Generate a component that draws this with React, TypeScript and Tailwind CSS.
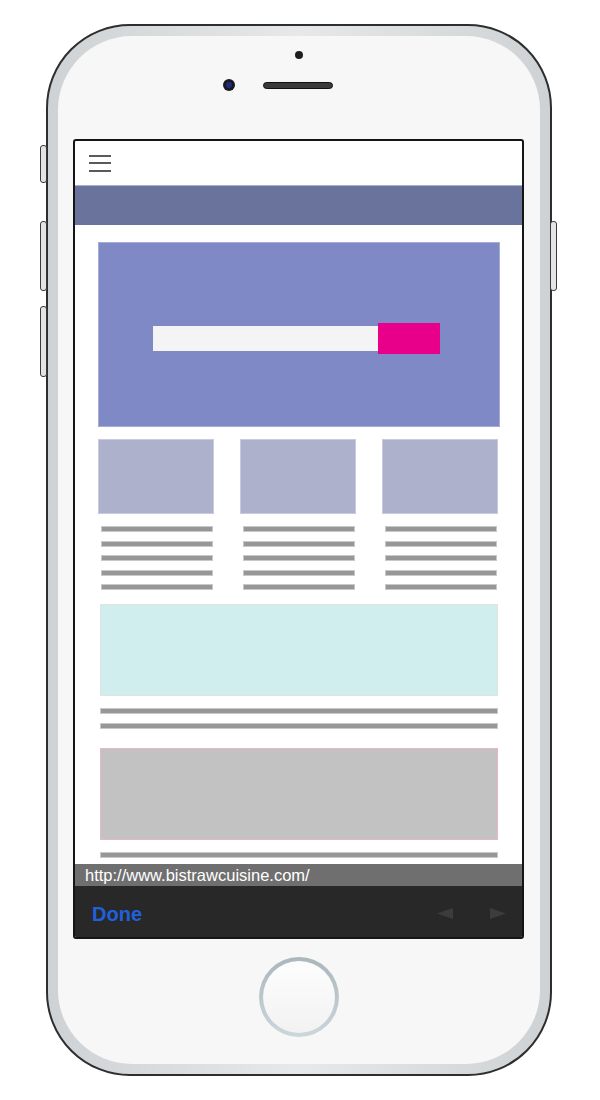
import React from "react";

const SideButton = ({ className }: { className: string }) => (
  <div
    className={`absolute w-[7px] rounded-[3px] border-[1.5px] border-[#3a3a3a] bg-[#e4e4e4] ${className}`}
  />
);

const Line = ({ className = "" }: { className?: string }) => (
  <div className={`h-[6px] bg-[#979797] border border-[#c9c9c9] ${className}`} />
);

const Column = () => (
  <div className="flex w-[116px] flex-col">
    <div className="h-[75px] border border-[#c8cbe0] bg-[#adb1cb]" />
    <div className="mt-[12px] flex flex-col gap-[8.5px] pl-[3px] pr-[1px]">
      <Line />
      <Line />
      <Line />
      <Line />
      <Line />
    </div>
  </div>
);

const Screen = () => (
  <div className="ml-[15px] mt-[48px] flex h-[800px] w-[451px] flex-col self-start overflow-hidden rounded-[3px] border-2 border-[#151515] bg-white">
    {/* header */}
    <div className="flex h-[44px] shrink-0 items-center pl-[14px]">
      <div className="flex w-[22px] flex-col gap-[5.5px]">
        <div className="h-[2px] bg-[#5a5a5a]" />
        <div className="h-[2px] bg-[#5a5a5a]" />
        <div className="h-[2px] bg-[#5a5a5a]" />
      </div>
    </div>
    <div className="h-[40px] shrink-0 border-t border-[#a9b0d0] bg-[#6a739c]" />

    {/* page content */}
    <div className="flex flex-1 flex-col overflow-hidden pl-[23px] pr-[22px]">
      <div className="mt-[17px] flex h-[185px] shrink-0 border border-[#a6acd6] bg-[#7f89c5] pt-[80px] pl-[54px]">
        <div className="mt-[3px] h-[25px] w-[225px] bg-[#f4f4f4]" />
        <div className="h-[31px] w-[62px] bg-[#e8008a]" />
      </div>

      <div className="mr-[2px] mt-[12px] flex shrink-0 justify-between">
        <Column />
        <Column />
        <Column />
      </div>

      <div className="ml-[2px] mr-[2px] mt-[14px] h-[92px] shrink-0 border border-[#e2e2e2] bg-[#d0eeed]" />
      <div className="mx-[2px] mt-[12px] flex shrink-0 flex-col gap-[9px]">
        <Line />
        <Line />
      </div>
      <div className="mx-[2px] mt-[19px] h-[92px] shrink-0 border border-[#e8b6c6] bg-[#c2c2c2]" />
      <div className="mx-[2px] mt-[12px] shrink-0">
        <Line />
      </div>
    </div>

    {/* browser chrome */}
    <div className="flex h-[22px] shrink-0 items-center bg-[#6f6f6f] pl-[10px]">
      <span className="font-['Liberation_Sans',sans-serif] text-[16.5px] leading-none text-white">
        http://www.bistrawcuisine.com/
      </span>
    </div>
    <div className="flex h-[51px] shrink-0 items-center justify-between bg-[#282828] pl-[17px] pr-[16px] pt-[4px]">
      <span className="font-['Liberation_Sans',sans-serif] text-[20px] font-bold leading-none text-[#2160dc]">
        Done
      </span>
      <div className="flex items-center gap-[37px]">
        <svg width="16" height="11" viewBox="0 0 16 11">
          <polygon points="0,5.5 16,0 16,11" fill="#3c3c3c" />
        </svg>
        <svg width="16" height="11" viewBox="0 0 16 11">
          <polygon points="16,5.5 0,0 0,11" fill="#3c3c3c" />
        </svg>
      </div>
    </div>
  </div>
);

export default function App() {
  return (
    <div className="h-[1100px] w-[600px] bg-white pl-[46px] pt-[24px]">
      <div className="relative h-[1052px] w-[506px] rounded-[84px] border-2 border-[#2e2e2e] bg-gradient-to-r from-[#cfd2d4] via-[#e6e8e9] to-[#cfd2d4] p-[10px]">
        <SideButton className="-left-[8px] top-[119px] h-[38px]" />
        <SideButton className="-left-[8px] top-[195px] h-[70px]" />
        <SideButton className="-left-[8px] top-[280px] h-[71px]" />
        <SideButton className="-right-[7px] top-[195px] h-[70px]" />

        <div className="flex h-full flex-col items-center rounded-[74px] bg-[#f7f7f7]">
          <div className="mt-[15px] h-[8px] w-[8px] rounded-full bg-[#1e1e1e]" />
          <div className="mt-[20px] flex w-[152px] items-center gap-[28px]">
            <div className="flex h-[12px] w-[12px] items-center justify-center rounded-full bg-[#1a1a1a]">
              <div className="h-[6px] w-[6px] rounded-full bg-[#1d2a8a]" />
            </div>
            <div className="h-[7px] w-[70px] rounded-full border border-[#111] bg-[#3a3a3a]" />
          </div>

          <Screen />

          <div className="mt-[18px] flex h-[80px] w-[80px] items-center justify-center rounded-full bg-gradient-to-b from-[#aab7bd] to-[#cdd6da] p-[4px]">
            <div className="h-full w-full rounded-full bg-gradient-to-b from-[#fdfdfd] to-[#f2f2f2]" />
          </div>
        </div>
      </div>
    </div>
  );
}
